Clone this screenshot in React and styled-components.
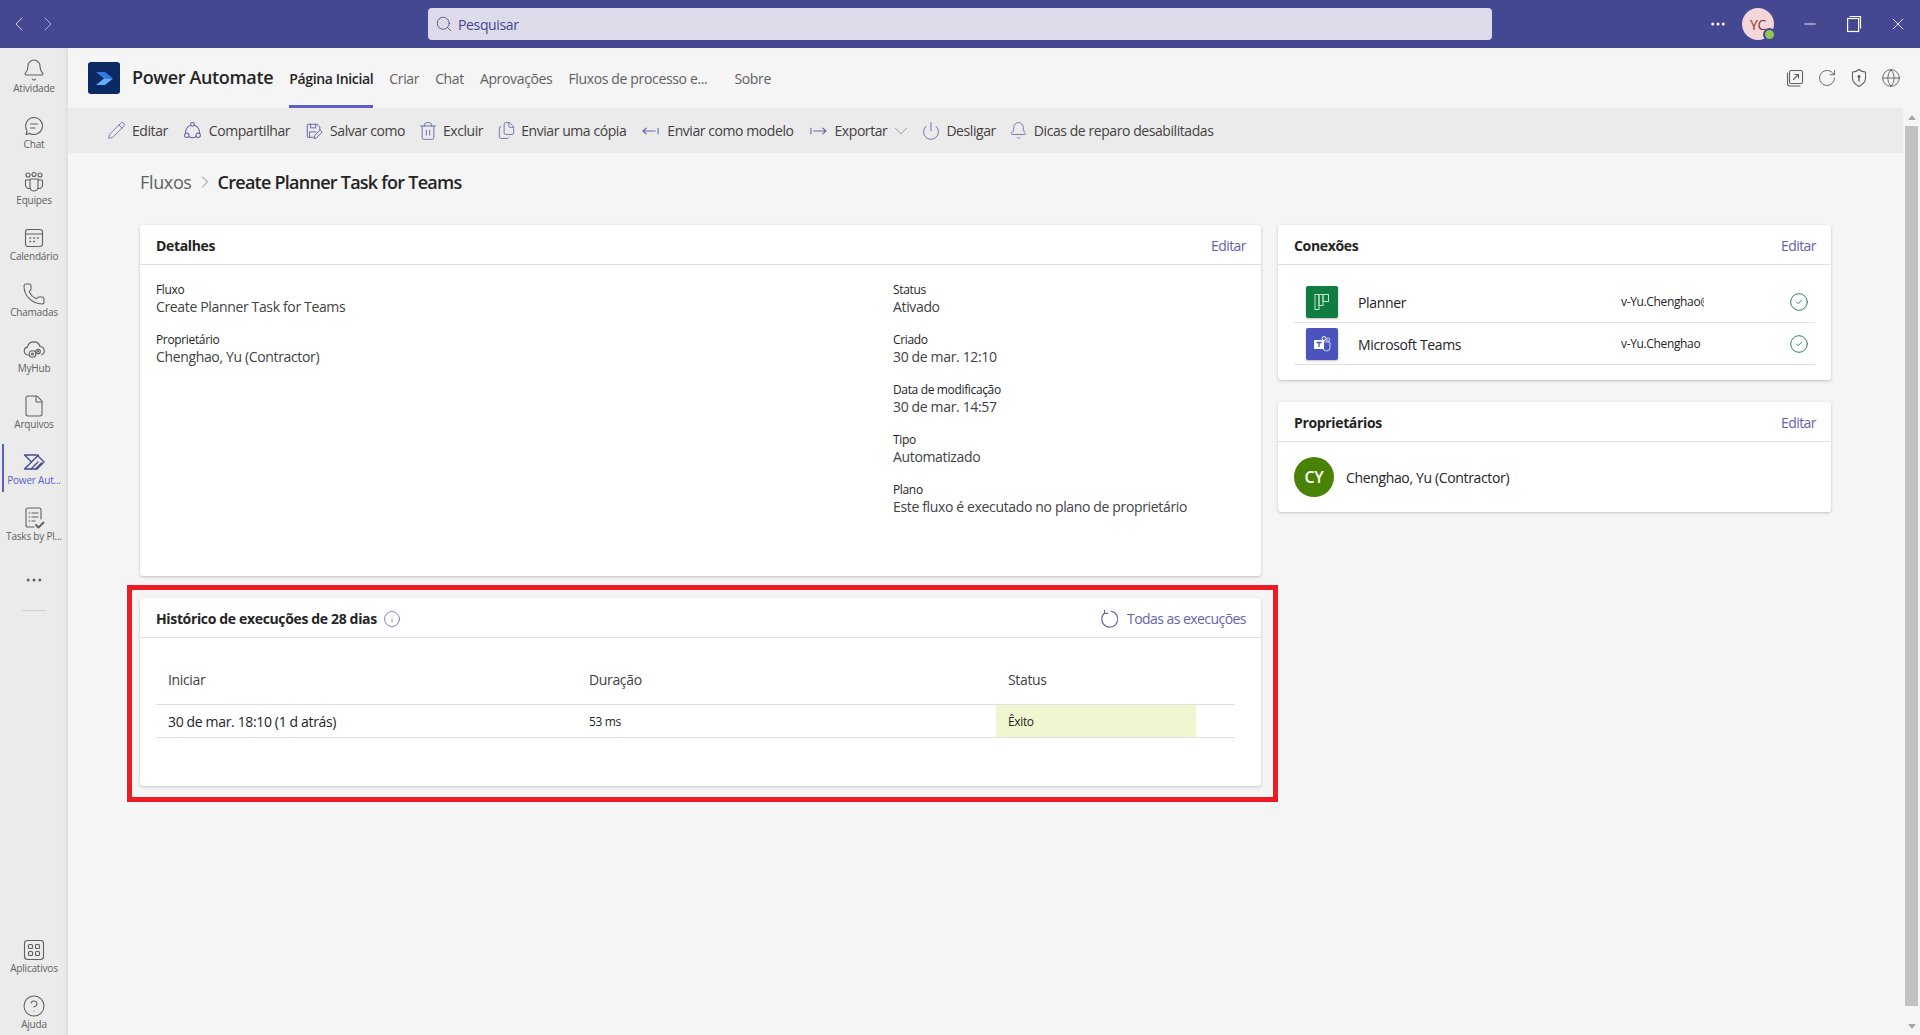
import React from 'react';
import styled, { createGlobalStyle } from 'styled-components';
import {
  Bell, ChevronDown, ChevronLeft, ChevronRight, CircleCheck, CircleHelp, File, Files,
  Globe, Info, Minus, MoreHorizontal, Pencil, Phone, Power, RotateCw, Search, Trash2, X,
} from 'lucide-react';

const GlobalStyle = createGlobalStyle`
  html, body {
    margin: 0;
    height: 100%;
    overflow: hidden;
    background: #f5f5f5;
  }
  * { box-sizing: border-box; }
  body {
    font-family: "Open Sans", "Noto Sans", "Liberation Sans", sans-serif;
    font-size: 14px;
    letter-spacing: -0.35px;
    color: #242424;
  }
`;

const Shell = styled.div`
  height: 100vh;
  display: flex;
  flex-direction: column;
`;

const TopBar = styled.header`
  height: 48px;
  flex: none;
  background: #444791;
  display: flex;
  align-items: center;
  color: #fff;
`;

const HistoryNav = styled.div`
  width: 428px;
  flex: none;
  display: flex;
  gap: 5px;
  padding-left: 7px;
  color: #d6d7ee;
`;

const SearchBox = styled.div`
  width: 1064px;
  height: 32px;
  flex: none;
  background: #dcdbe9;
  border-radius: 4px;
  display: flex;
  align-items: center;
  gap: 5px;
  padding-left: 7px;
  color: #444791;
`;

const TopRight = styled.div`
  flex: 1;
  display: flex;
  align-items: center;
  justify-content: flex-end;
`;

const TopDots = styled.span`
  display: flex;
  margin-right: 15px;
`;

const UserAvatar = styled.div`
  position: relative;
  width: 32px;
  height: 32px;
  margin-right: 14px;
  border-radius: 50%;
  background: #f3d6d8;
  color: #8a3340;
  font-size: 14px;
  display: flex;
  align-items: center;
  justify-content: center;
`;

const Presence = styled.span`
  position: absolute;
  right: -2px;
  bottom: -1px;
  width: 13px;
  height: 13px;
  border-radius: 50%;
  background: #92c353;
  border: 2px solid #444791;
`;

const WindowButton = styled.span`
  width: 44px;
  display: flex;
  justify-content: center;
`;

const Body = styled.div`
  flex: 1;
  min-height: 0;
  display: flex;
`;

const Rail = styled.nav`
  width: 68px;
  flex: none;
  background: #ebebeb;
  box-shadow: inset -4px 0 4px -3px rgba(0, 0, 0, 0.09);
  display: flex;
  flex-direction: column;
  align-items: center;
  gap: 8px;
  padding-top: 4px;
  overflow: hidden;
`;

const RailItem = styled.div`
  position: relative;
  width: 68px;
  height: 48px;
  flex: none;
  display: flex;
  flex-direction: column;
  align-items: center;
  padding-top: 6px;
  color: ${p => (p.$active ? '#444791' : '#616161')};

  &::before {
    content: '';
    display: ${p => (p.$active ? 'block' : 'none')};
    position: absolute;
    left: 2px;
    top: 0;
    bottom: 0;
    width: 2px;
    background: #5b5fc7;
  }
`;

const RailLabel = styled.span`
  font-size: 10px;
  line-height: 12px;
  margin-top: 0;
  letter-spacing: -0.2px;
  white-space: nowrap;
  color: ${p => (p.$active ? '#5b5fc7' : '#616161')};
`;

const RailRule = styled.div`
  width: 24px;
  height: 1px;
  flex: none;
  margin-top: -2px;
  background: #d1d1d1;
`;

const RailFooter = styled.div`
  margin-top: auto;
  display: flex;
  flex-direction: column;
  gap: 8px;
  margin-bottom: -1px;
`;

const Main = styled.main`
  flex: 1;
  min-width: 0;
  display: flex;
  flex-direction: column;
`;

const AppHeader = styled.div`
  height: 60px;
  flex: none;
  display: flex;
  align-items: center;
  padding-left: 20px;
`;

const AppTitle = styled.h1`
  margin: -2px 16px 0 12px;
  font-size: 18px;
  font-weight: 600;
  color: #242424;
  white-space: nowrap;
`;

const Tabs = styled.div`
  align-self: stretch;
  display: flex;
  gap: 16px;
`;

const Tab = styled.div`
  display: flex;
  align-items: center;
  margin-left: ${p => (p.$spaced ? '11px' : '0')};
  color: ${p => (p.$active ? '#242424' : '#616161')};
  font-weight: ${p => (p.$active ? 600 : 400)};
  border-bottom: 3px solid ${p => (p.$active ? '#5b5fc7' : 'transparent')};
  border-top: 3px solid transparent;
  white-space: nowrap;
`;

const HeaderTools = styled.div`
  margin-left: auto;
  display: flex;
  gap: 12px;
  padding-right: 19px;
  color: #616161;
`;

const Workspace = styled.div`
  flex: 1;
  min-height: 0;
  display: flex;
`;

const Page = styled.div`
  flex: 1;
  min-width: 0;
`;

const Toolbar = styled.div`
  height: 45px;
  background: #ebebeb;
  display: flex;
  align-items: center;
  gap: 16px;
  padding-left: 40px;
  letter-spacing: -0.43px;
`;

const ToolButton = styled.div`
  display: flex;
  align-items: center;
  gap: 8px;
  color: #424242;
  white-space: nowrap;
`;

/* fixed slot, so a glyph with blank margins still takes its real width */
const ToolGlyph = styled.span`
  width: ${p => p.$w}px;
  flex: none;
  display: flex;
  justify-content: center;
  color: ${p => p.$color || '#6264a7'};

  svg { flex: none; }
`;

const Content = styled.div`
  padding: 17px 72px 0;
`;

const Breadcrumb = styled.div`
  height: 24px;
  display: flex;
  align-items: center;
  gap: 3px;
  margin-bottom: 31px;
  font-size: 18px;
  color: #616161;
`;

const Crumb = styled.span`
  color: #242424;
  font-weight: 600;
  letter-spacing: -0.75px;
`;

const CardGrid = styled.div`
  display: grid;
  grid-template-columns: 1121px 553px;
  column-gap: 17px;
  align-items: start;
`;

const Column = styled.div`
  display: flex;
  flex-direction: column;
  gap: 22px;
`;

const Card = styled.section`
  position: relative;
  background: #fff;
  border-radius: 3px;
  box-shadow: 0 1px 3px rgba(0, 0, 0, 0.22);
  min-height: ${p => p.$height || 0}px;
`;

/* the red frame of the screenshot's annotation */
const Highlighted = styled(Card)`
  &::after {
    content: '';
    position: absolute;
    inset: -13px -17px -16px -13px;
    border: 5px solid #ed1c24;
    pointer-events: none;
  }
`;

const CardHeader = styled.div`
  height: 40px;
  display: flex;
  align-items: center;
  justify-content: space-between;
  padding: 2px 15px 0 16px;
  border-bottom: 1px solid #e0e0e0;
`;

const CardTitle = styled.h2`
  margin: 0;
  font-size: 14px;
  font-weight: 700;
  color: #242424;
  display: flex;
  align-items: center;
  gap: 6px;

  svg { color: #6264a7; }
`;

const HeaderLink = styled.a`
  color: #6264a7;
  display: flex;
  align-items: center;
  gap: 7px;
  letter-spacing: -0.55px;
`;

const DetailGrid = styled.div`
  display: grid;
  grid-template-columns: 737px 1fr;
  padding: 17px 16px 0;
`;

const Field = styled.div`
  margin-bottom: 16px;
`;

const FieldLabel = styled.div`
  font-size: 12px;
  line-height: 16px;
  font-weight: 500;
`;

const FieldValue = styled.div`
  line-height: 18px;
  color: #424242;
`;

const ConnectionList = styled.div`
  padding: 16px 16px 15px;
`;

const ConnectionRow = styled.div`
  height: 42px;
  display: grid;
  grid-template-columns: 52px 263px 83px 1fr;
  align-items: center;
  padding: 0 8px 0 12px;
  border-bottom: 1px solid #e0e0e0;
`;

const ConnectorTile = styled.div`
  width: 32px;
  height: 32px;
  border-radius: 2px;
  background: ${p => p.$color};
  box-shadow: 0 1px 2px rgba(0, 0, 0, 0.25);
  display: flex;
  align-items: center;
  justify-content: center;
`;

const ConnectionName = styled.span`
  color: #242424;
  padding-top: 1px;
`;

const ConnectionAccount = styled.span`
  font-size: 12px;
  overflow: hidden;
  white-space: nowrap;
`;

const StatusOk = styled.span`
  justify-self: end;
  display: flex;
  margin-right: -2px;
  color: #237b4b;
`;

const OwnerRow = styled.div`
  display: flex;
  align-items: center;
  gap: 12px;
  padding: 15px 16px;
`;

const OwnerAvatar = styled.div`
  width: 40px;
  height: 40px;
  border-radius: 50%;
  background: #498205;
  color: #fff;
  font-size: 16px;
  font-weight: 600;
  display: flex;
  align-items: center;
  justify-content: center;
`;

const RunTable = styled.div`
  padding: 16px 26px 48px 16px;
`;

const RunRow = styled.div`
  display: grid;
  grid-template-columns: 421px 419px 200px 1fr;
  height: ${p => (p.$head ? 51 : 33)}px;
  border-bottom: 1px solid #e0e0e0;
`;

const HeadCell = styled.div`
  display: flex;
  align-items: center;
  padding-left: 12px;
  font-weight: 500;
  color: #424242;
`;

const RunCell = styled.div`
  display: flex;
  align-items: center;
  padding-left: 12px;
  font-size: ${p => (p.$small ? 12 : 14)}px;
  color: #242424;
  background: ${p => p.$fill || 'transparent'};
`;

const FakeScrollbar = styled.div`
  width: 17px;
  flex: none;
  background: #f5f5f5;
  display: flex;
  flex-direction: column;
  align-items: center;
`;

const ScrollArrow = styled.div`
  height: 18px;
  flex: none;
  margin-top: ${p => (p.$down ? 'auto' : '0')};
  display: flex;
  align-items: center;
  justify-content: center;

  &::before {
    content: '';
    border-left: 4px solid transparent;
    border-right: 4px solid transparent;
    ${p => (p.$down ? 'border-top' : 'border-bottom')}: 5px solid #a8a8a8;
  }
`;

const ScrollThumb = styled.div`
  width: 13px;
  height: 880px;
  flex: none;
  background: #c1c1c1;
`;

const line = { fill: 'none', stroke: 'currentColor', strokeWidth: 1.1, strokeLinecap: 'round', strokeLinejoin: 'round' };

const ChatIcon = () => (
  <svg width="24" height="24" viewBox="0 0 24 24" {...line}>
    <path d="M12 3.500a8.500 8.500 0 1 1-4.200 15.900L4 20.500l1.100-3.800A8.500 8.500 0 0 1 12 3.500z" />
    <path d="M8.500 10h7M8.500 14h4.500" />
  </svg>
);

const TeamsIcon = () => (
  <svg width="24" height="24" viewBox="0 0 24 24" {...line}>
    <circle cx="6" cy="5" r="2" />
    <circle cx="12" cy="4.500" r="2" />
    <circle cx="18" cy="5" r="2" />
    <path d="M8 9h8v8a4 4 0 0 1-8 0z" />
    <path d="M8 10H3.500v5a3.500 3.500 0 0 0 4.500 3.400M16 10h4.500v5a3.500 3.500 0 0 1-4.500 3.400" />
  </svg>
);

const CalendarIcon = () => (
  <svg width="24" height="24" viewBox="0 0 24 24" {...line}>
    <rect x="3.500" y="3.500" width="17" height="17" rx="2.500" />
    <path d="M3.500 8h17" />
    <path d="M8 12h.5M11.800 12h.5M15.500 12h.5M8 15.500h.5M11.800 15.500h.5" strokeWidth="1.600" />
  </svg>
);

const HubIcon = () => (
  <svg width="24" height="24" viewBox="0 0 24 24" {...line}>
    <path d="M7 17H6a4 4 0 0 1-.6-7.900A6.500 6.500 0 0 1 18 8.500a4.300 4.300 0 0 1 1.500 8.300" />
    <circle cx="10.500" cy="16" r="3.300" />
    <circle cx="10.500" cy="16" r="1" />
    <circle cx="16" cy="13.500" r="2.300" />
    <circle cx="16" cy="13.500" r=".6" />
  </svg>
);

const FlowIcon = () => (
  <svg width="24" height="24" viewBox="0 0 24 24" {...line} strokeWidth="1.300">
    <path d="M2.500 5h12.500l7 7-7 7H2.500l7-7z" />
    <path d="M9.500 12l7-7M9 19l7-7M13.500 19l6-6" />
  </svg>
);

const TasksIcon = () => (
  <svg width="24" height="24" viewBox="0 0 24 24" {...line}>
    <path d="M12 21H6a2 2 0 0 1-2-2V4a2 2 0 0 1 2-2h11a2 2 0 0 1 2 2v9" />
    <path d="M7 7h1M10 7h6M7 11h1M10 11h6M7 15h1M10 15h3" />
    <path d="M14 19l2.500 2.500 5-5" strokeWidth="1.800" />
  </svg>
);

const AppsIcon = () => (
  <svg width="24" height="24" viewBox="0 0 24 24" {...line}>
    <rect x="2.500" y="2.500" width="19" height="19" rx="3" />
    <rect x="6.500" y="6.500" width="4" height="4" rx="1" />
    <rect x="13.500" y="6.500" width="4" height="4" rx="1" />
    <rect x="6.500" y="13.500" width="4" height="4" rx="1" />
    <rect x="13.500" y="13.500" width="4" height="4" rx="1" />
  </svg>
);

const ShareIcon = () => (
  <svg width="19" height="19" viewBox="0 0 20 20" {...line}>
    <circle cx="10" cy="3.500" r="2" />
    <circle cx="4" cy="15" r="2.300" />
    <circle cx="16" cy="15" r="2.300" />
    <path d="M8.200 4.500A7.500 7.500 0 0 0 2.800 13M11.800 4.500A7.500 7.500 0 0 1 17.200 13M6.300 16.500a7.500 7.500 0 0 0 7.400 0" />
  </svg>
);

const SaveIcon = () => (
  <svg width="18" height="18" viewBox="0 0 20 20" {...line}>
    <path d="M9 17H3.500a1 1 0 0 1-1-1V3.500a1 1 0 0 1 1-1h10l3 3V9" />
    <path d="M6 2.500v4h6v-4M5 17v-6h7" />
    <path d="M10 18l.7-3 6-6 2.300 2.300-6 6z" />
  </svg>
);

const ArrowBar = ({ $flip }) => (
  <svg width="17" height="20" viewBox="0 0 18 20" {...line} style={$flip ? { transform: 'scaleX(-1)' } : undefined}>
    <path d="M1 10h13M1 10l3.500-3M1 10l3.500 3M17 7v6" />
  </svg>
);

const RunsIcon = () => (
  <svg width="20" height="20" viewBox="0 0 20 20" {...line}>
    <path d="M11 2.200a8 8 0 1 1-6.600 2" />
    <path d="M4.500 1.200v3.200h3.200" />
  </svg>
);

const PopOutIcon = () => (
  <svg width="20" height="20" viewBox="0 0 20 20" {...line}>
    <rect x="4.500" y="2.500" width="13" height="13" rx="1.500" />
    <path d="M2.500 5v10.500a2.500 2.500 0 0 0 2.500 2.500H15M8.500 11.500l5-5M10 6.500h3.500V10" />
  </svg>
);

const ShieldIcon = () => (
  <svg width="20" height="20" viewBox="0 0 20 20" {...line}>
    <path d="M10 1.500c2 1.800 4 2.500 6.500 2.500v6.500c0 3.500-3 6-6.500 8-3.500-2-6.500-4.500-6.500-8V4c2.500 0 4.500-.7 6.500-2.500z" />
    <circle cx="10" cy="8.500" r="1" fill="currentColor" />
    <path d="M10 9v4" strokeWidth="1.400" />
  </svg>
);

const RestoreIcon = () => (
  <svg width="16" height="18" viewBox="0 0 16 18" fill="none" stroke="currentColor" strokeWidth="1.200">
    <rect x="1.600" y="3.500" width="11" height="13" />
    <path d="M3.500 1.500h11v12" />
  </svg>
);

const FlowLogo = () => (
  <svg width="32" height="32" viewBox="0 0 32 32">
    <rect width="32" height="32" rx="3" fill="#0b2a63" />
    <path d="M8 10h9l8 6.500h-9z" fill="#2f7ce8" />
    <path d="M16 16.500h9l-8 6.500H8z" fill="#66b0ff" />
  </svg>
);

const PlannerGlyph = () => (
  <svg width="16" height="18" viewBox="0 0 16 18" fill="none" stroke="#bfe3cd" strokeWidth="1">
    <rect x="1" y="1.500" width="4" height="15" />
    <rect x="5" y="1.500" width="4" height="11" />
    <rect x="9" y="1.500" width="5.500" height="7" />
  </svg>
);

const TeamsGlyph = () => (
  <svg width="18" height="18" viewBox="0 0 18 18">
    <circle cx="11" cy="3.500" r="2" fill="none" stroke="#fff" strokeWidth="1" />
    <circle cx="15.200" cy="4.500" r="1.500" fill="none" stroke="#d6d8f5" strokeWidth="1" />
    <path d="M8 7h9v5.500a3.500 3.500 0 0 1-7 0z" fill="none" stroke="#d6d8f5" strokeWidth="1" />
    <rect x="1" y="5" width="10" height="9" rx="1" fill="#fff" />
    <path d="M3.500 7.500h5M6 7.500v4.500" stroke="#4b53bc" strokeWidth="1.300" />
  </svg>
);

const railTop = [
  { label: 'Atividade', icon: <Bell size={24} strokeWidth={1.05} /> },
  { label: 'Chat', icon: <ChatIcon /> },
  { label: 'Equipes', icon: <TeamsIcon /> },
  { label: 'Calendário', icon: <CalendarIcon /> },
  { label: 'Chamadas', icon: <Phone size={24} strokeWidth={1.05} /> },
  { label: 'MyHub', icon: <HubIcon /> },
  { label: 'Arquivos', icon: <File size={24} strokeWidth={1.05} /> },
  { label: 'Power Aut...', icon: <FlowIcon />, active: true },
  { label: 'Tasks by Pl...', icon: <TasksIcon /> },
];

const tabs = ['Página Inicial', 'Criar', 'Chat', 'Aprovações', 'Fluxos de processo e...'];

const leftFields = [
  ['Fluxo', 'Create Planner Task for Teams'],
  ['Proprietário', 'Chenghao, Yu (Contractor)'],
];

const rightFields = [
  ['Status', 'Ativado'],
  ['Criado', '30 de mar. 12:10'],
  ['Data de modificação', '30 de mar. 14:57'],
  ['Tipo', 'Automatizado'],
  ['Plano', 'Este fluxo é executado no plano de proprietário'],
];

const connections = [
  { name: 'Planner', account: 'v-Yu.Chenghao@microsoft.com', color: '#107c41', glyph: <PlannerGlyph /> },
  { name: 'Microsoft Teams', account: 'v-Yu.Chenghao', color: '#4b53bc', glyph: <TeamsGlyph /> },
];

const Fields = ({ items }) => (
  <div>
    {items.map(([label, value]) => (
      <Field key={label}>
        <FieldLabel>{label}</FieldLabel>
        <FieldValue>{value}</FieldValue>
      </Field>
    ))}
  </div>
);

const App = () => (
  <Shell>
    <GlobalStyle />
    <TopBar>
      <HistoryNav>
        <ChevronLeft size={24} strokeWidth={1} />
        <ChevronRight size={24} strokeWidth={1} opacity={0.7} />
      </HistoryNav>
      <SearchBox>
        <Search size={18} strokeWidth={1.1} />
        <span>Pesquisar</span>
      </SearchBox>
      <TopRight>
        <TopDots><MoreHorizontal size={18} strokeWidth={2} /></TopDots>
        <UserAvatar>YC<Presence /></UserAvatar>
        <WindowButton><Minus size={18} strokeWidth={1.2} /></WindowButton>
        <WindowButton><RestoreIcon /></WindowButton>
        <WindowButton><X size={20} strokeWidth={1} /></WindowButton>
      </TopRight>
    </TopBar>

    <Body>
      <Rail>
        {railTop.map(item => (
          <RailItem key={item.label} $active={item.active}>
            {item.icon}
            <RailLabel $active={item.active}>{item.label}</RailLabel>
          </RailItem>
        ))}
        <RailItem>
          <MoreHorizontal size={20} strokeWidth={1.6} style={{ marginTop: 8 }} />
        </RailItem>
        <RailRule />
        <RailFooter>
          <RailItem>
            <AppsIcon />
            <RailLabel>Aplicativos</RailLabel>
          </RailItem>
          <RailItem>
            <CircleHelp size={24} strokeWidth={1.05} />
            <RailLabel>Ajuda</RailLabel>
          </RailItem>
        </RailFooter>
      </Rail>

      <Main>
        <AppHeader>
          <FlowLogo />
          <AppTitle>Power Automate</AppTitle>
          <Tabs>
            {tabs.map((tab, i) => (
              <Tab key={tab} $active={i === 0}>{tab}</Tab>
            ))}
            <Tab $spaced>Sobre</Tab>
          </Tabs>
          <HeaderTools>
            <PopOutIcon />
            <RotateCw size={20} strokeWidth={1.1} />
            <ShieldIcon />
            <Globe size={20} strokeWidth={1.1} />
          </HeaderTools>
        </AppHeader>

        <Workspace>
          <Page>
            <Toolbar>
              <ToolButton><ToolGlyph $w={16}><Pencil size={19} strokeWidth={1.05} /></ToolGlyph>Editar</ToolButton>
              <ToolButton><ToolGlyph $w={17}><ShareIcon /></ToolGlyph>Compartilhar</ToolButton>
              <ToolButton><ToolGlyph $w={16}><SaveIcon /></ToolGlyph>Salvar como</ToolButton>
              <ToolButton><ToolGlyph $w={14}><Trash2 size={20} strokeWidth={1.05} /></ToolGlyph>Excluir</ToolButton>
              <ToolButton><ToolGlyph $w={14}><Files size={19} strokeWidth={1.05} /></ToolGlyph>Enviar uma cópia</ToolButton>
              <ToolButton><ToolGlyph $w={17}><ArrowBar /></ToolGlyph>Enviar como modelo</ToolButton>
              <ToolButton>
                <ToolGlyph $w={17}><ArrowBar $flip /></ToolGlyph>Exportar
                <ToolGlyph $w={12} $color="#8a8a8a"><ChevronDown size={22} strokeWidth={0.9} /></ToolGlyph>
              </ToolButton>
              <ToolButton><ToolGlyph $w={15}><Power size={20} strokeWidth={1.05} /></ToolGlyph>Desligar</ToolButton>
              <ToolButton><ToolGlyph $w={14}><Bell size={19} strokeWidth={1.05} /></ToolGlyph>Dicas de reparo desabilitadas</ToolButton>
            </Toolbar>

            <Content>
              <Breadcrumb>
                Fluxos
                <ChevronRight size={20} strokeWidth={0.9} />
                <Crumb>Create Planner Task for Teams</Crumb>
              </Breadcrumb>

              <CardGrid>
                <Column>
                  <Card $height={351}>
                    <CardHeader>
                      <CardTitle>Detalhes</CardTitle>
                      <HeaderLink>Editar</HeaderLink>
                    </CardHeader>
                    <DetailGrid>
                      <Fields items={leftFields} />
                      <Fields items={rightFields} />
                    </DetailGrid>
                  </Card>

                  <Highlighted>
                    <CardHeader>
                      <CardTitle>
                        Histórico de execuções de 28 dias
                        <Info size={18} strokeWidth={1} />
                      </CardTitle>
                      <HeaderLink>
                        <RunsIcon />
                        Todas as execuções
                      </HeaderLink>
                    </CardHeader>
                    <RunTable>
                      <RunRow $head>
                        <HeadCell>Iniciar</HeadCell>
                        <HeadCell>Duração</HeadCell>
                        <HeadCell>Status</HeadCell>
                      </RunRow>
                      <RunRow>
                        <RunCell>30 de mar. 18:10 (1 d atrás)</RunCell>
                        <RunCell $small>53 ms</RunCell>
                        <RunCell $small $fill="#f0f6d0">Êxito</RunCell>
                      </RunRow>
                    </RunTable>
                  </Highlighted>
                </Column>

                <Column>
                  <Card>
                    <CardHeader>
                      <CardTitle>Conexões</CardTitle>
                      <HeaderLink>Editar</HeaderLink>
                    </CardHeader>
                    <ConnectionList>
                      {connections.map(c => (
                        <ConnectionRow key={c.name}>
                          <ConnectorTile $color={c.color}>{c.glyph}</ConnectorTile>
                          <ConnectionName>{c.name}</ConnectionName>
                          <ConnectionAccount>{c.account}</ConnectionAccount>
                          <StatusOk><CircleCheck size={20} strokeWidth={1.1} /></StatusOk>
                        </ConnectionRow>
                      ))}
                    </ConnectionList>
                  </Card>

                  <Card>
                    <CardHeader>
                      <CardTitle>Proprietários</CardTitle>
                      <HeaderLink>Editar</HeaderLink>
                    </CardHeader>
                    <OwnerRow>
                      <OwnerAvatar>CY</OwnerAvatar>
                      <span>Chenghao, Yu (Contractor)</span>
                    </OwnerRow>
                  </Card>
                </Column>
              </CardGrid>
            </Content>
          </Page>

          <FakeScrollbar>
            <ScrollArrow />
            <ScrollThumb />
            <ScrollArrow $down />
          </FakeScrollbar>
        </Workspace>
      </Main>
    </Body>
  </Shell>
);

export default App;
